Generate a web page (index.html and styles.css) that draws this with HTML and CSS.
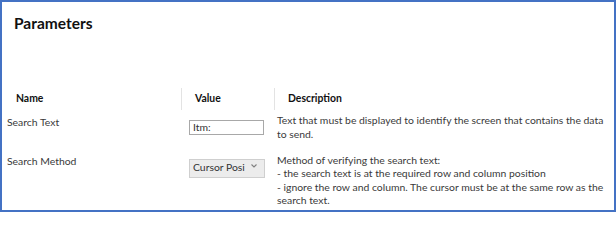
FILE: index.html
```html
<!DOCTYPE html>
<html>
<head>
<meta charset="utf-8">
<link rel="stylesheet" href="styles.css">
</head>
<body>
<div class="frame">
  <h1 class="title">Parameters</h1>
  <div class="table">
    <div class="hcell hname">Name</div>
    <div class="hcell hvalue">Value</div>
    <div class="hcell hdesc">Description</div>

    <div class="cell name">Search Text</div>
    <div class="cell value v1"><div class="input">Itm:</div></div>
    <div class="cell desc">Text that must be displayed to identify the screen that contains the data to send.</div>

    <div class="cell name">Search Method</div>
    <div class="cell value v2"><div class="select"><span class="seltext">Cursor Posi</span><svg class="chev" width="6" height="4" viewBox="0 0 6 4"><path d="M0.5 0.5 L3 3 L5.5 0.5" fill="none" stroke="#808080" stroke-width="1.1"/></svg></div></div>
    <div class="cell desc">Method of verifying the search text:<br>- the search text is at the required row and column position<br>- ignore the row and column. The cursor must be at the same row as the search text.</div>
  </div>
</div>
</body>
</html>
```
FILE: styles.css
```css
html, body { margin: 0; padding: 0; background: #fff; }
.frame {
  width: 616px;
  height: 212px;
  box-sizing: border-box;
  border: 2px solid #4472c4;
  overflow: hidden;
  font-family: Lato, "Open Sans", sans-serif;
  color: #3a3a3a;
  padding-left: 5px;
}
.title {
  margin: 0;
  padding: 10px 0 0 7px;
  font-size: 15.5px;
  line-height: 22px;
  font-weight: 700;
  color: #111;
  height: 55px;
  box-sizing: border-box;
}
.table {
  margin-top: 31px;
  display: grid;
  grid-template-columns: 174px 93px 1fr;
  font-size: 10.4px;
  line-height: 13.5px;
}
.hcell {
  height: 22px;
  display: flex;
  align-items: center;
  font-weight: 700;
  color: #111;
  margin-bottom: 4px;
}
.hname { padding-left: 9px; }
.hvalue, .hdesc { padding-left: 13px; border-left: 1px solid #e3e3e3; }
.cell { padding-bottom: 12.5px; }
.name { padding-top: 1.5px; }
.value { padding-left: 8px; }
.v1 { padding-top: 6px; }
.v2 { padding-top: 5px; }
.desc { padding-left: 3px; padding-right: 4px; }
.input {
  width: 75px;
  height: 15px;
  box-sizing: border-box;
  border: 1px solid #a8a8a8;
  font-size: 10.4px;
  line-height: 13px;
  padding-left: 3px;
  color: #333;
}
.select {
  width: 76px;
  height: 19px;
  box-sizing: border-box;
  border: 1px solid #cfcfcf;
  background: #ececec;
  display: flex;
  align-items: center;
  justify-content: space-between;
  padding: 0 7px 0 3px;
  font-size: 10.4px;
  color: #333;
  white-space: nowrap;
  overflow: hidden;
}
.seltext { overflow: hidden; }
.chev { display: block; margin-bottom: 4px; }
```
